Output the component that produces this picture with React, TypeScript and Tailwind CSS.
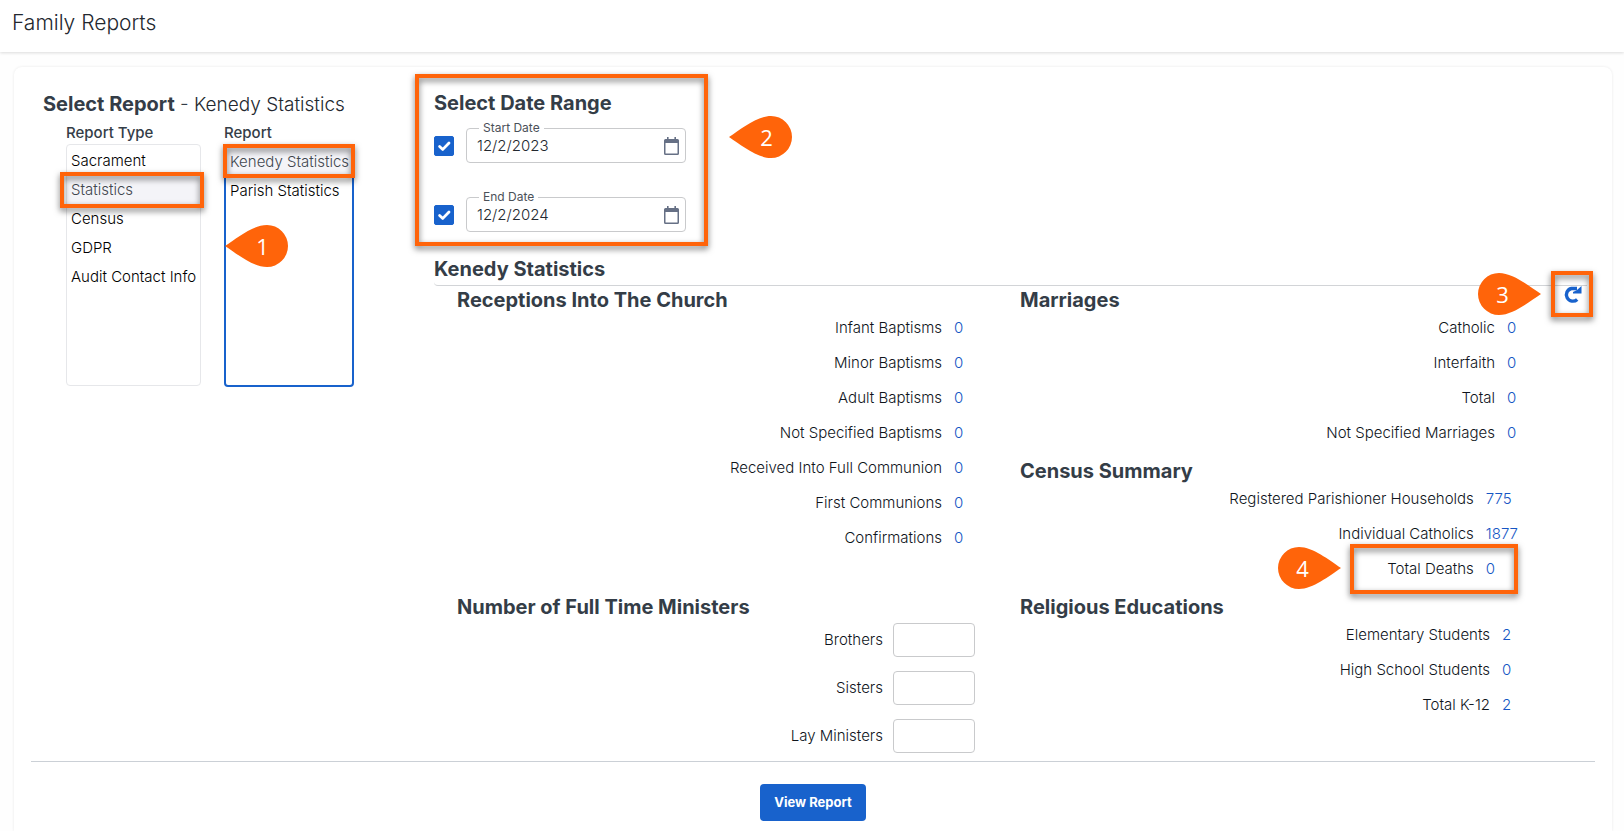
import { useState } from 'react'
import type { ReactNode } from 'react'

type Row = { label: string; value: number }

const reportTypes = ['Sacrament', 'Statistics', 'Census', 'GDPR', 'Audit Contact Info']
const reports = ['Kenedy Statistics', 'Parish Statistics']

const receptions: Row[] = [
  { label: 'Infant Baptisms', value: 0 },
  { label: 'Minor Baptisms', value: 0 },
  { label: 'Adult Baptisms', value: 0 },
  { label: 'Not Specified Baptisms', value: 0 },
  { label: 'Received Into Full Communion', value: 0 },
  { label: 'First Communions', value: 0 },
  { label: 'Confirmations', value: 0 },
]

const marriages: Row[] = [
  { label: 'Catholic', value: 0 },
  { label: 'Interfaith', value: 0 },
  { label: 'Total', value: 0 },
  { label: 'Not Specified Marriages', value: 0 },
]

const census: Row[] = [
  { label: 'Registered Parishioner Households', value: 775 },
  { label: 'Individual Catholics', value: 1877 },
  { label: 'Total Deaths', value: 0 },
]

const education: Row[] = [
  { label: 'Elementary Students', value: 2 },
  { label: 'High School Students', value: 0 },
  { label: 'Total K-12', value: 2 },
]

const ministers = ['Brothers', 'Sisters', 'Lay Ministers']

// orange frame laid over whatever it points out
function Highlight({ className }: { className: string }) {
  return (
    <span
      className={`pointer-events-none absolute z-10 border-4 border-[#ff640a] drop-shadow-[0_3px_3px_rgba(0,0,0,0.55)] ${className}`}
    />
  )
}

function Callout({ n, point, className }: { n: number; point: 'left' | 'right'; className: string }) {
  return (
    <span className={`pointer-events-none absolute z-10 flex h-[42px] w-[63px] items-center ${className}`}>
      <svg viewBox="0 0 63 42" className="absolute inset-0 h-full w-full" fill="#ff640a">
        {point === 'left' ? (
          <path d="M0 21 C12 13 28 0 42 0 A21 21 0 0 1 42 42 C28 42 12 29 0 21 Z" />
        ) : (
          <path d="M63 21 C51 13 35 0 21 0 A21 21 0 0 0 21 42 C35 42 51 29 63 21 Z" />
        )}
      </svg>
      <span
        className={`relative w-full text-center font-['Open_Sans',sans-serif] text-[22px] font-normal leading-none text-white ${
          point === 'left' ? 'pl-3' : 'pr-3.5'
        }`}
      >
        {n}
      </span>
    </span>
  )
}

function Heading({ children }: { children: ReactNode }) {
  return <h2 className="text-xl font-bold leading-7 text-[#343d47]">{children}</h2>
}

function Option({ label, selected, onSelect, children }: {
  label: string
  selected: boolean
  onSelect: () => void
  children?: ReactNode
}) {
  return (
    <li
      role="option"
      aria-selected={selected}
      onClick={onSelect}
      className={`relative flex h-[29px] cursor-pointer items-center whitespace-nowrap px-1 leading-5 ${
        selected ? 'bg-[#f4f4f8] text-[#41474f]' : 'text-black'
      }`}
    >
      {label}
      {children}
    </li>
  )
}

function DateField({ id, label, value }: { id: string; label: string; value: string }) {
  return (
    <div className="flex items-center gap-3">
      <span className="relative flex h-5 w-5">
        <input
          type="checkbox"
          defaultChecked
          aria-label={`Use ${label}`}
          className="peer h-5 w-5 appearance-none rounded-xs border border-[#1862cc] checked:bg-[#1862cc]"
        />
        <svg viewBox="0 0 20 20" className="pointer-events-none absolute inset-0 hidden h-5 w-5 peer-checked:block">
          <path
            d="M5.600 10.400 L8.800 13.400 L15 7"
            fill="none"
            stroke="white"
            strokeWidth="2.800"
            strokeLinecap="round"
            strokeLinejoin="round"
          />
        </svg>
      </span>
      <div className="relative flex h-[35px] w-[220px] items-center rounded border border-[#c9cacc]">
        <label
          htmlFor={id}
          className="absolute -top-[9px] left-3 bg-white px-1 text-xs font-normal leading-4 text-[#4b5159]"
        >
          {label}
        </label>
        <input id={id} defaultValue={value} className="w-0 flex-1 pl-2.5 pt-0.5 text-[#23282f] outline-none" />
        <button type="button" aria-label={`Pick ${label}`} className="mr-1.5 p-0">
          <svg viewBox="0 0 15 18" className="h-[18px] w-[15px]">
            <path
              d="M3 0h1.600v2h5.800V0H12v2h1.500A1.500 1.500 0 0 1 15 3.500v13a1.500 1.500 0 0 1-1.500 1.500h-12A1.500 1.500 0 0 1 0 16.500v-13A1.500 1.500 0 0 1 1.500 2H3zM1.500 6v10.500h12V6z"
              fill="#667085"
              fillRule="evenodd"
            />
          </svg>
        </button>
      </div>
    </div>
  )
}

function StatTable({ rows, valueWidth }: { rows: Row[]; valueWidth: string }) {
  return (
    <table className="ml-auto">
      <tbody>
        {rows.map((row) => (
          <tr key={row.label} className="h-[35px] align-top">
            <th scope="row" className="p-0 pr-3 pt-1 text-right font-light leading-5 text-[#0f151c]">
              {row.label}
            </th>
            <td className={`relative p-0 pt-1 text-left leading-5 text-[#1556c4] ${valueWidth}`}>
              {row.value}
              {row.label === 'Total Deaths' && (
                <>
                  <Highlight className="-top-[11px] right-0 h-[50px] w-[168px]" />
                  <Callout n={4} point="right" className="-top-2 right-[177px]" />
                </>
              )}
            </td>
          </tr>
        ))}
      </tbody>
    </table>
  )
}

export default function App() {
  const [type, setType] = useState('Statistics')
  const [report, setReport] = useState('Kenedy Statistics')

  return (
    <div className="flex min-h-screen flex-col bg-[#fefefe] font-['Inter',sans-serif] text-[15px] font-light text-[#343d47]">
      <header className="flex h-[52px] items-center bg-white px-3 pb-1.5 shadow-[0_1px_3px_rgba(0,0,0,0.14)]">
        <h1 className="text-[21px] font-light text-[#23282f]">Family Reports</h1>
      </header>

      <main className="ml-3.5 mr-3 mt-[15px] flex-1 rounded-t-lg bg-white px-[17px] pb-2 shadow-[0_0_3px_rgba(0,0,0,0.09)]">
        <div className="flex">
          {/* Report picker */}
          <section className="w-[403px] shrink-0 pl-3 pt-[23px]">
            <h2 className="text-[19px] leading-7">
              <span className="text-xl font-bold">Select Report</span>
              <span> - </span>
              <span className="text-[#23282f]">{report}</span>
            </h2>
            <div className="mt-1 flex pl-[23px]">
              <div className="w-[135px]">
                <p id="type-label" className="font-medium leading-5">Report Type</p>
                <ul
                  role="listbox"
                  aria-labelledby="type-label"
                  className="mt-px h-[242px] rounded border border-[#e6e7ea] pt-px"
                >
                  {reportTypes.map((item) => (
                    <Option key={item} label={item} selected={item === type} onSelect={() => setType(item)}>
                      {item === 'Statistics' && <Highlight className="-left-[7px] -right-1 -top-[3px] h-9" />}
                    </Option>
                  ))}
                </ul>
              </div>
              <div className="relative ml-[23px] w-[130px]">
                <p id="report-label" className="font-medium leading-5">Report</p>
                <ul
                  role="listbox"
                  aria-labelledby="report-label"
                  className="mt-px h-[243px] rounded border-2 border-[#1862cc] pt-px"
                >
                  {reports.map((item) => (
                    <Option key={item} label={item} selected={item === report} onSelect={() => setReport(item)}>
                      {item === 'Kenedy Statistics' && <Highlight className="-left-[3px] -right-[3px] -top-[3px] h-[34px]" />}
                    </Option>
                  ))}
                </ul>
                <Callout n={1} point="left" className="left-px top-[102px]" />
              </div>
            </div>
          </section>

          {/* Report content */}
          <section className="min-w-0 flex-1 pt-[22px]">
            <div className="relative w-[252px]">
              <Heading>Select Date Range</Heading>
              <div className="mt-[11px] space-y-[34px]">
                <DateField id="start-date" label="Start Date" value="12/2/2023" />
                <DateField id="end-date" label="End Date" value="12/2/2024" />
              </div>
              <Highlight className="-bottom-3.5 -left-[19px] -right-[22px] -top-[15px]" />
              <Callout n={2} point="left" className="-right-[106px] top-[27px]" />
            </div>

            <div className="mr-2 mt-[23px] rounded-bl border-b border-[#d2d4d7] pb-0.5">
              <Heading>Kenedy Statistics</Heading>
            </div>

            <div className="flex pl-[23px]">
              <div className="grid flex-1 grid-cols-2 gap-x-8 gap-y-[3px]">
                <div className="pr-[13px]">
                  <Heading>Receptions Into The Church</Heading>
                  <div className="pr-2.5">
                    <StatTable rows={receptions} valueWidth="w-[11px]" />
                  </div>
                </div>
                <div className="space-y-[3px] pr-[33px]">
                  <div>
                    <Heading>Marriages</Heading>
                    <StatTable rows={marriages} valueWidth="w-[11px]" />
                  </div>
                  <div>
                    <Heading>Census Summary</Heading>
                    <StatTable rows={census} valueWidth="w-[31px]" />
                  </div>
                </div>
                <div className="pr-[13px]">
                  <Heading>Number of Full Time Ministers</Heading>
                  <div className="mt-0.5 space-y-3.5">
                    {ministers.map((name) => (
                      <label key={name} className="flex items-center justify-end gap-2.5 text-[#0f151c]">
                        {name}
                        <input className="h-[34px] w-[82px] rounded border border-[#c9cacc] px-2" />
                      </label>
                    ))}
                  </div>
                </div>
                <div className="pr-[33px]">
                  <Heading>Religious Educations</Heading>
                  <StatTable rows={education} valueWidth="w-4" />
                </div>
              </div>
              <div className="relative mr-0.5 w-[42px] shrink-0">
                <button type="button" aria-label="Refresh" className="block w-full">
                  <svg viewBox="0 0 19 18" className="mx-auto h-[18px] w-[19px]">
                    <path
                      d="M14.200 13.400 A6.400 6.400 0 1 1 8.400 2.500 H14"
                      fill="none"
                      stroke="#1862cc"
                      strokeWidth="3.400"
                    />
                    <path d="M18.500 0 V7.500 H10 V6 L14 4 Z" fill="#1862cc" />
                  </svg>
                </button>
                <Highlight className="-top-[15px] left-0 h-[46px] w-full" />
                <Callout n={3} point="right" className="-top-[13px] right-[52px]" />
              </div>
            </div>
          </section>
        </div>

        <div className="mt-2 flex justify-center border-t border-[#cbd0d6] pt-[22px]">
          <button type="button" className="h-[37px] rounded bg-[#1862cc] px-3.5 text-[13px] font-bold text-white">
            View Report
          </button>
        </div>
      </main>
    </div>
  )
}
